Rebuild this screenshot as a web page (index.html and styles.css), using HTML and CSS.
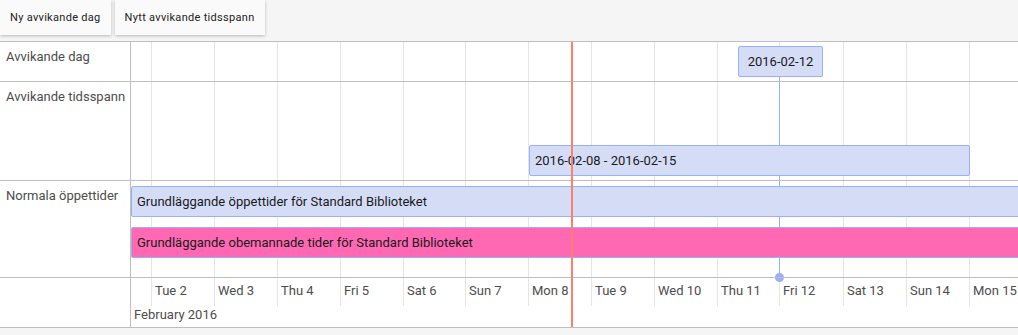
FILE: index.html
```html
<!DOCTYPE html>
<html lang="sv">
<head>
    <meta charset="UTF-8">
    <title>Öppettider</title>
    <link rel="stylesheet" href="styles.css">
</head>
<body>
    <div class="toolbar">
        <button class="tool-btn">Ny avvikande dag</button>
        <button class="tool-btn">Nytt avvikande tidsspann</button>
    </div>

    <div class="timeline">
        <div class="labels">
            <div class="label row-day">Avvikande dag</div>
            <div class="label row-span">Avvikande tidsspann</div>
            <div class="label row-normal">Normala öppettider</div>
            <div class="label row-axis"></div>
        </div>

        <div class="center">
            <!-- vertikala linjer, en per dag -->
            <div class="grid">
                <div class="vline" style="left: 20px"></div>
                <div class="vline" style="left: 83px"></div>
                <div class="vline" style="left: 146px"></div>
                <div class="vline" style="left: 209px"></div>
                <div class="vline" style="left: 272px"></div>
                <div class="vline" style="left: 334px"></div>
                <div class="vline" style="left: 397px"></div>
                <div class="vline" style="left: 460px"></div>
                <div class="vline" style="left: 523px"></div>
                <div class="vline" style="left: 586px"></div>
                <div class="vline" style="left: 648px"></div>
                <div class="vline" style="left: 712px"></div>
                <div class="vline" style="left: 775px"></div>
                <div class="vline" style="left: 838px"></div>
            </div>

            <!-- linjen från dagsrutan ner till axeln, under alla fält -->
            <div class="box-line" style="left: 648px"></div>
            <div class="box-dot" style="left: 644px"></div>

            <div class="row row-day">
                <div class="item box" style="left: 607px">2016-02-12</div>
            </div>
            <div class="row row-span">
                <div class="item range" style="left: 398px; width: 441px">2016-02-08 - 2016-02-15</div>
            </div>
            <div class="row row-normal">
                <div class="item range bar-open">Grundläggande öppettider för Standard Biblioteket</div>
                <div class="item range bar-closed">Grundläggande obemannade tider för Standard Biblioteket</div>
            </div>
            <div class="row row-axis">
                <div class="tick" style="left: 20px">Tue 2</div>
                <div class="tick" style="left: 83px">Wed 3</div>
                <div class="tick" style="left: 146px">Thu 4</div>
                <div class="tick" style="left: 209px">Fri 5</div>
                <div class="tick" style="left: 272px">Sat 6</div>
                <div class="tick" style="left: 334px">Sun 7</div>
                <div class="tick" style="left: 397px">Mon 8</div>
                <div class="tick" style="left: 460px">Tue 9</div>
                <div class="tick" style="left: 523px">Wed 10</div>
                <div class="tick" style="left: 586px">Thu 11</div>
                <div class="tick" style="left: 648px">Fri 12</div>
                <div class="tick" style="left: 712px">Sat 13</div>
                <div class="tick" style="left: 775px">Sun 14</div>
                <div class="tick" style="left: 838px">Mon 15</div>
                <div class="month">February 2016</div>
            </div>

            <div class="now" style="left: 440px"></div>
        </div>
    </div>
</body>
</html>
```

FILE: styles.css
```css
body {
    margin: 0;
    font-family: Roboto, sans-serif;
    color: #4d4d4d;
    background: #f5f5f5;
}

.toolbar {
    height: 41px;
    display: flex;
    gap: 4px;
    align-items: flex-start;
    background: #f5f5f5;
}

.tool-btn {
    height: 35px;
    padding: 0 10px;
    border: none;
    background: #fafafa;
    box-shadow: 0 1px 3px rgba(0, 0, 0, 0.25);
    font-family: inherit;
    font-size: 11px;
    letter-spacing: 0.3px;
    color: #222;
    cursor: pointer;
}

.timeline {
    display: flex;
    background: #fff;
    border-top: 1px solid #bfbfbf;
    border-bottom: 1px solid #bfbfbf;
}

.labels {
    width: 130px;
    border-right: 1px solid #bfbfbf;
}

.label {
    padding: 7px 6px;
    font-size: 13px;
    white-space: nowrap;
    box-sizing: border-box;
}

.row-day { height: 40px; border-bottom: 1px solid #bfbfbf; }
.row-span { height: 99px; border-bottom: 1px solid #bfbfbf; }
.row-normal { height: 97px; border-bottom: 1px solid #bfbfbf; }
.row-axis { height: 49px; }

.center {
    flex: 1;
    position: relative;
    overflow: hidden;
}

.row {
    position: relative;
    box-sizing: border-box;
}

.grid {
    position: absolute;
    top: 0;
    left: 0;
    right: 0;
    height: 264px;
}

.vline {
    position: absolute;
    top: 0;
    bottom: 0;
    width: 1px;
    background: #e5e5e5;
}

.item {
    position: absolute;
    height: 31px;
    box-sizing: border-box;
    border: 1px solid #97b0f8;
    background: #d5ddf6;
    color: #1a1a1a;
    font-size: 13px;
    line-height: 29px;
    white-space: nowrap;
    border-radius: 2px;
}

.box {
    top: 4px;
    width: 85px;
    text-align: center;
}

.range {
    top: 63px;
    padding-left: 5px;
}

.bar-open {
    top: 5px;
    left: 0;
    width: 1000px;
}

.bar-closed {
    top: 46px;
    left: 0;
    width: 1000px;
    background: #ff69b4;
}

.tick {
    position: absolute;
    top: 5px;
    padding-left: 4px;
    font-size: 13px;
    white-space: nowrap;
}

.month {
    position: absolute;
    top: 29px;
    left: 3px;
    font-size: 13px;
}

.box-line {
    position: absolute;
    top: 35px;
    width: 1px;
    height: 200px;
    background: #97b0f8;
}

.box-dot {
    position: absolute;
    top: 231px;
    width: 9px;
    height: 9px;
    border-radius: 50%;
    background: #97b0f8;
}

.now {
    position: absolute;
    top: 0;
    bottom: 0;
    width: 2px;
    background: #ff7f6e;
}
```
